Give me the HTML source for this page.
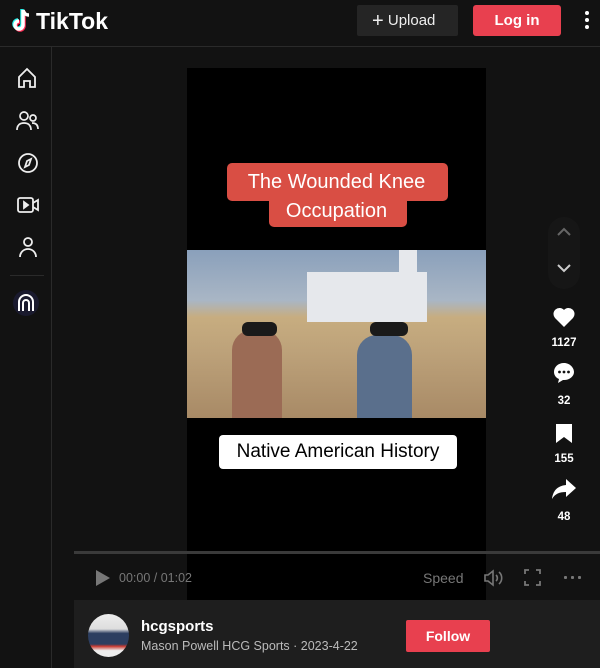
<!DOCTYPE html>
<html><head><meta charset="utf-8"><style>
*{margin:0;padding:0;box-sizing:border-box}
body{width:600px;height:668px;background:#121212;font-family:"Liberation Sans",sans-serif;color:#fff;position:relative;overflow:hidden}
.hdr{position:absolute;left:0;top:0;width:600px;height:47px;border-bottom:1px solid #2a2a2a;background:#121212}
.side{position:absolute;left:0;top:47px;width:52px;height:621px;border-right:1px solid #2a2a2a}
.ab{position:absolute}
.video{position:absolute;left:187px;top:68px;width:299px;height:532px;background:#000}
</style></head><body>
<div class="hdr">
 <svg class="ab" style="left:9px;top:8px" width="26" height="26" viewBox="0 0 26 26"><path d="M14 2v15a4 4 0 1 1-4-4" fill="none" stroke="#25f4ee" stroke-width="3.5" transform="translate(-1,-1)"/><path d="M14 2v15a4 4 0 1 1-4-4" fill="none" stroke="#fe2c55" stroke-width="3.5" transform="translate(1,1)"/><path d="M14 2v15a4 4 0 1 1-4-4M14 2c1 4 3 5 6 5" fill="none" stroke="#fff" stroke-width="3.5"/></svg>
 <div class="ab" style="left:36px;top:8px;font-size:23px;font-weight:bold">TikTok</div>
 <div class="ab" style="left:357px;top:5px;width:101px;height:31px;background:#252525;border-radius:2px;font-size:15px;line-height:31px;color:#eee"><span style="margin-left:15px;font-size:20px;vertical-align:-2px">+</span> Upload</div>
 <div class="ab" style="left:473px;top:5px;width:88px;height:31px;background:#e8404f;border-radius:3px;font-size:15px;font-weight:bold;line-height:31px;text-align:center">Log in</div>
 <div class="ab" style="left:585px;top:11px;width:4px">
  <div style="width:4px;height:4px;background:#fff;border-radius:2px;margin-bottom:3px"></div><div style="width:4px;height:4px;background:#fff;border-radius:2px;margin-bottom:3px"></div><div style="width:4px;height:4px;background:#fff;border-radius:2px"></div></div>
</div>
<div class="side">
 <svg class="ab" style="left:16px;top:20px" width="22" height="22" viewBox="0 0 22 22" fill="none" stroke="#eee" stroke-width="1.8"><path d="M3 10L11 2l8 8v10h-5v-6H8v6H3z"/></svg>
 <svg class="ab" style="left:16px;top:63px" width="24" height="22" viewBox="0 0 24 22" fill="none" stroke="#eee" stroke-width="1.7"><circle cx="8" cy="6" r="4"/><circle cx="17" cy="8" r="3"/><path d="M1 20c0-5 3-7 7-7s7 2 7 7M16 13c4 0 6 2 6 6"/></svg>
 <svg class="ab" style="left:17px;top:105px" width="22" height="22" viewBox="0 0 22 22" fill="none" stroke="#eee" stroke-width="1.8"><circle cx="11" cy="11" r="9"/><path d="M14 7l-2 6-4 2 2-6z"/></svg>
 <svg class="ab" style="left:16px;top:148px" width="24" height="20" viewBox="0 0 24 20" fill="none" stroke="#eee" stroke-width="1.8"><rect x="2" y="3" width="15" height="14" rx="2"/><path d="M17 8l5-3v10l-5-3"/><path d="M8 7v6l4-3z" fill="#eee"/></svg>
 <svg class="ab" style="left:17px;top:189px" width="22" height="22" viewBox="0 0 22 22" fill="none" stroke="#eee" stroke-width="1.8"><circle cx="11" cy="6" r="4"/><path d="M3 21c0-5 4-8 8-8s8 3 8 8"/></svg>
 <div class="ab" style="left:10px;top:228px;width:34px;height:1px;background:#2a2a2a"></div>
 <div class="ab" style="left:13px;top:243px;width:26px;height:26px;border-radius:13px;background:#1a1a2e"></div>
 <svg class="ab" style="left:17px;top:247px" width="18" height="18" viewBox="0 0 18 18" fill="none" stroke="#fff" stroke-width="2"><path d="M2 17V8a7 7 0 0 1 14 0v9M6 17V9a3 3 0 0 1 6 0v8"/></svg>
</div>
<div class="video">
 <div class="ab" style="left:40px;top:95px;width:221px;height:38px;background:#d94e44;border-radius:5px"></div>
 <div class="ab" style="left:82px;top:127px;width:138px;height:32px;background:#d94e44;border-radius:5px"></div>
 <div class="ab" style="left:0;top:100px;width:299px;text-align:center;font-size:20px;line-height:29px">The Wounded Knee<br>Occupation</div>
 <div class="ab" style="left:0;top:182px;width:299px;height:168px;background:linear-gradient(#8aa0bb 0,#a9b6c5 30%,#c7ad80 40%,#bda27a 60%,#a88a66 100%)">
  <div class="ab" style="left:120px;top:22px;width:120px;height:50px;background:#e6e8ec"></div>
  <div class="ab" style="left:212px;top:0;width:18px;height:40px;background:#e6e8ec"></div>
  <div class="ab" style="left:45px;top:80px;width:50px;height:88px;background:#9b6b55;border-radius:20px 20px 0 0"></div>
  <div class="ab" style="left:55px;top:72px;width:35px;height:14px;background:#1a1a1a;border-radius:6px"></div>
  <div class="ab" style="left:170px;top:85px;width:55px;height:83px;background:#5a6f8c;border-radius:20px 20px 0 0"></div>
  <div class="ab" style="left:183px;top:72px;width:38px;height:14px;background:#1a1a1a;border-radius:6px"></div>
 </div>
 <div class="ab" style="left:32px;top:367px;width:238px;height:34px;background:#fff;border-radius:4px;color:#000;font-size:19px;line-height:34px;text-align:center">Native American History</div>
</div>
<div class="ab" style="left:74px;top:551px;width:526px;height:3px;background:#3a3a3a"></div>
<svg class="ab" style="left:95px;top:569px" width="16" height="18" viewBox="0 0 16 18"><path d="M1 1l14 8-14 8z" fill="#777"/></svg>
<div class="ab" style="left:119px;top:571px;font-size:12.5px;color:#777">00:00 / 01:02</div>
<div class="ab" style="left:423px;top:570px;font-size:14px;color:#777">Speed</div>
<svg class="ab" style="left:483px;top:569px" width="22" height="18" viewBox="0 0 22 18" fill="none" stroke="#777" stroke-width="1.6"><path d="M2 6h3l5-4v14l-5-4H2z"/><path d="M13 6a4 4 0 0 1 0 6M16 3a8 8 0 0 1 0 12"/></svg>
<svg class="ab" style="left:524px;top:569px" width="17" height="17" viewBox="0 0 17 17" fill="none" stroke="#777" stroke-width="1.8"><path d="M1 5V1h4M12 1h4v4M16 12v4h-4M5 16H1v-4"/></svg>
<div class="ab" style="left:562px;top:576px;width:20px;height:3px;background:radial-gradient(circle,#777 1.5px,transparent 1.6px) 0 0/7px 3px"></div>
<div class="ab" style="left:74px;top:600px;width:526px;height:68px;background:#1e1e1e"></div>
<div class="ab" style="left:88px;top:614px;width:41px;height:43px;border-radius:50%;background:linear-gradient(#eee 0,#ddd 35%,#2c3e60 45%,#2c3e60 70%,#c53a32 75%,#eee 85%)"></div>
<div class="ab" style="left:141px;top:618px;font-size:15px;font-weight:bold">hcgsports</div>
<div class="ab" style="left:141px;top:639px;font-size:12.5px;color:#bbb">Mason Powell HCG Sports · 2023-4-22</div>
<div class="ab" style="left:406px;top:620px;width:84px;height:32px;background:#e8404f;border-radius:2px;font-size:14px;font-weight:bold;line-height:32px;text-align:center">Follow</div>
<div class="ab" style="left:548px;top:217px;width:32px;height:72px;border-radius:16px;background:#161616"></div>
<svg class="ab" style="left:556px;top:226px" width="16" height="12" viewBox="0 0 16 12" fill="none" stroke="#666" stroke-width="2"><path d="M2 9l6-6 6 6"/></svg>
<svg class="ab" style="left:556px;top:262px" width="16" height="12" viewBox="0 0 16 12" fill="none" stroke="#ccc" stroke-width="2"><path d="M2 3l6 6 6-6"/></svg>
<svg class="ab" style="left:552px;top:306px" width="24" height="22" viewBox="0 0 24 22"><path d="M12 21L3 12A5.5 5.5 0 0 1 12 4a5.5 5.5 0 0 1 9 8z" fill="#fff"/></svg>
<div class="ab" style="left:544px;top:337px;width:40px;text-align:center;font-size:11.5px;font-weight:bold">1127</div>
<svg class="ab" style="left:552px;top:361px" width="24" height="24" viewBox="0 0 24 24"><path d="M12 2C6 2 2 6 2 11c0 3 2 6 5 7l-1 4 5-3h1c6 0 10-4 10-8s-4-9-10-9z" fill="#fff"/><circle cx="7.5" cy="11" r="1.4" fill="#121212"/><circle cx="12" cy="11" r="1.4" fill="#121212"/><circle cx="16.5" cy="11" r="1.4" fill="#121212"/></svg>
<div class="ab" style="left:544px;top:395px;width:40px;text-align:center;font-size:11.5px;font-weight:bold">32</div>
<svg class="ab" style="left:555px;top:422px" width="18" height="22" viewBox="0 0 18 22"><path d="M1 2h16v19l-8-6-8 6z" fill="#fff"/></svg>
<div class="ab" style="left:544px;top:453px;width:40px;text-align:center;font-size:11.5px;font-weight:bold">155</div>
<svg class="ab" style="left:551px;top:478px" width="26" height="22" viewBox="0 0 26 22"><path d="M15 1l10 9-10 9v-5C8 14 4 16 1 21c1-8 5-13 14-14z" fill="#fff"/></svg>
<div class="ab" style="left:544px;top:511px;width:40px;text-align:center;font-size:11.5px;font-weight:bold">48</div>
</body></html>
